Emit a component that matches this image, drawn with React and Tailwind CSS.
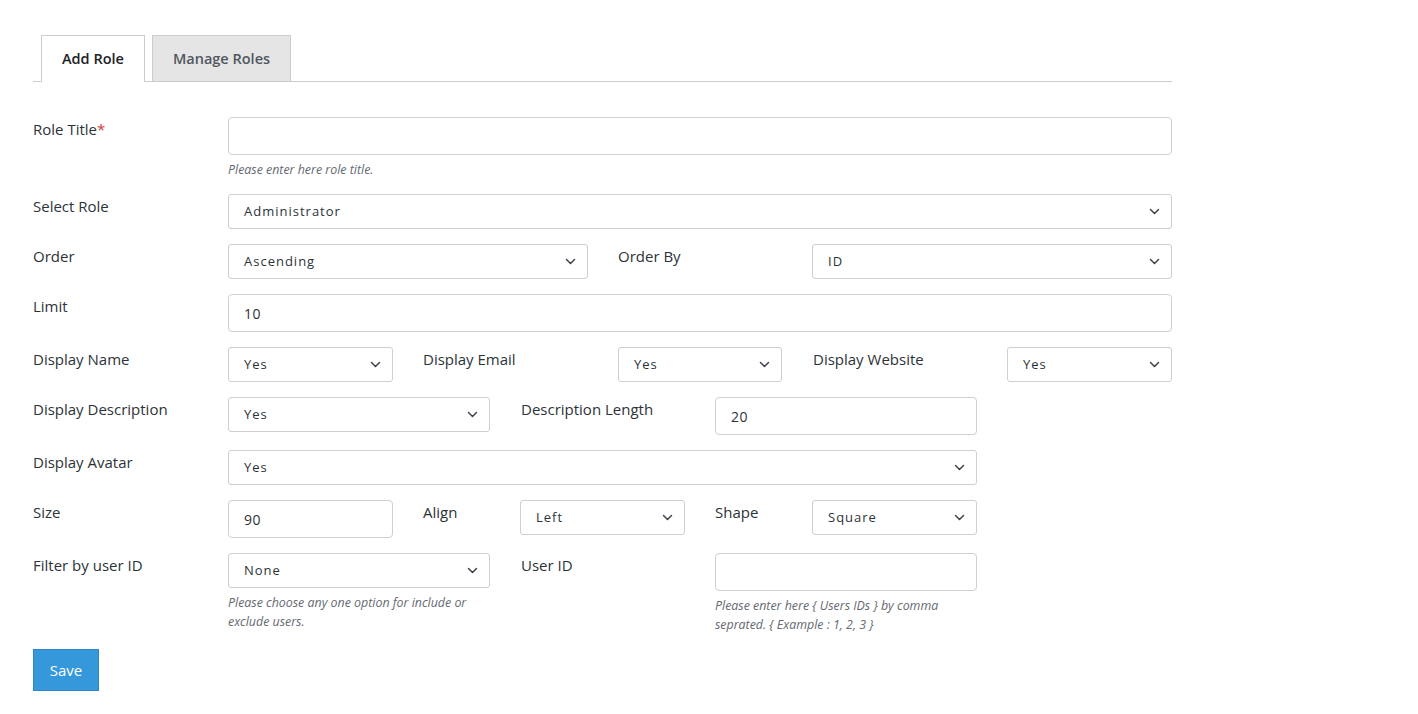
import React from "react";

const Chevron = () => (
  <svg width="11" height="7" viewBox="0 0 11 7" className="mr-[2px] shrink-0 text-[#3c434a]">
    <path d="M1.5 1.5L5.5 5.5L9.5 1.5" fill="none" stroke="currentColor" strokeWidth="1.5" strokeLinecap="round" strokeLinejoin="round" />
  </svg>
);

const Label = ({ children, className = "" }) => (
  <div className={`shrink-0 pt-[2px] text-[15px] leading-[21px] text-[#2c3338] ${className}`}>{children}</div>
);

const Select = ({ value, className = "" }) => (
  <div className={`flex h-[35px] shrink-0 items-center justify-between rounded-[3px] border border-[#cfcfcf] bg-white pl-[15px] pr-[9px] text-[13px] tracking-[1px] text-[#2c3338] ${className}`}>
    <span>{value}</span>
    <Chevron />
  </div>
);

const Input = ({ value = "", className = "" }) => (
  <div className={`flex h-[38px] shrink-0 items-center rounded-[4px] border border-[#cfcfcf] bg-white px-[15px] text-[14px] tracking-[0.6px] text-[#2c3338] ${className}`}>
    {value}
  </div>
);

const Help = ({ children }) => (
  <p className="mt-[5px] text-[12.4px] italic leading-[19px] text-[#646970]">{children}</p>
);

export default function App() {
  return (
    <div className="min-h-screen bg-white pt-[35px] pl-[33px]" style={{ fontFamily: '"Open Sans", "Noto Sans", sans-serif' }}>
      <div className="w-[1139px]">
        {/* tabs */}
        <div className="flex gap-[7px] border-b border-[#cccccc] pl-[8px]">
          <div className="-mb-px flex h-[47px] items-center border border-b-0 border-[#cccccc] bg-white px-[20px] text-[14.5px] font-semibold text-[#1d2327]">
            Add Role
          </div>
          <div className="flex h-[46px] items-center border border-b-0 border-[#cccccc] bg-[#e5e5e5] px-[20px] text-[14.5px] font-semibold text-[#50575e]">
            Manage Roles
          </div>
        </div>

        <div className="mt-[35px] flex flex-col gap-[15px]">
          <div className="flex items-start">
            <Label className="w-[195px]">
              Role Title<span className="text-[#d63638]">*</span>
            </Label>
            <div className="flex-1">
              <Input />
              <Help>Please enter here role title.</Help>
            </div>
          </div>

          <div className="flex items-start">
            <Label className="w-[195px]">Select Role</Label>
            <Select value="Administrator" className="flex-1" />
          </div>

          <div className="flex items-start">
            <Label className="w-[195px]">Order</Label>
            <Select value="Ascending" className="w-[360px]" />
            <Label className="ml-[30px] w-[194px]">Order By</Label>
            <Select value="ID" className="w-[360px]" />
          </div>

          <div className="flex items-start">
            <Label className="w-[195px]">Limit</Label>
            <Input value="10" className="flex-1" />
          </div>

          <div className="flex items-start">
            <Label className="w-[195px]">Display Name</Label>
            <Select value="Yes" className="w-[165px]" />
            <Label className="ml-[30px] w-[195px]">Display Email</Label>
            <Select value="Yes" className="w-[164px]" />
            <Label className="ml-[31px] w-[194px]">Display Website</Label>
            <Select value="Yes" className="w-[165px]" />
          </div>

          <div className="flex items-start">
            <Label className="w-[195px]">Display Description</Label>
            <Select value="Yes" className="w-[262px]" />
            <Label className="ml-[31px] w-[194px]">Description Length</Label>
            <Input value="20" className="w-[262px]" />
          </div>

          <div className="flex items-start">
            <Label className="w-[195px]">Display Avatar</Label>
            <Select value="Yes" className="w-[749px]" />
          </div>

          <div className="flex items-start">
            <Label className="w-[195px]">Size</Label>
            <Input value="90" className="w-[165px]" />
            <Label className="ml-[30px] w-[97px]">Align</Label>
            <Select value="Left" className="w-[165px]" />
            <Label className="ml-[30px] w-[97px]">Shape</Label>
            <Select value="Square" className="w-[165px]" />
          </div>

          <div className="flex items-start">
            <Label className="w-[195px]">Filter by user ID</Label>
            <div className="w-[262px] shrink-0">
              <Select value="None" />
              <Help>Please choose any one option for include or exclude users.</Help>
            </div>
            <Label className="ml-[31px] w-[194px]">User ID</Label>
            <div className="w-[262px] shrink-0">
              <Input />
              <Help>{"Please enter here { Users IDs } by comma seprated. { Example : 1, 2, 3 }"}</Help>
            </div>
          </div>
        </div>

        <button className="mt-[15px] h-[42px] w-[66px] border border-[#2d86c7] bg-[#3498db] text-[15px] text-white">
          Save
        </button>
      </div>
    </div>
  );
}
